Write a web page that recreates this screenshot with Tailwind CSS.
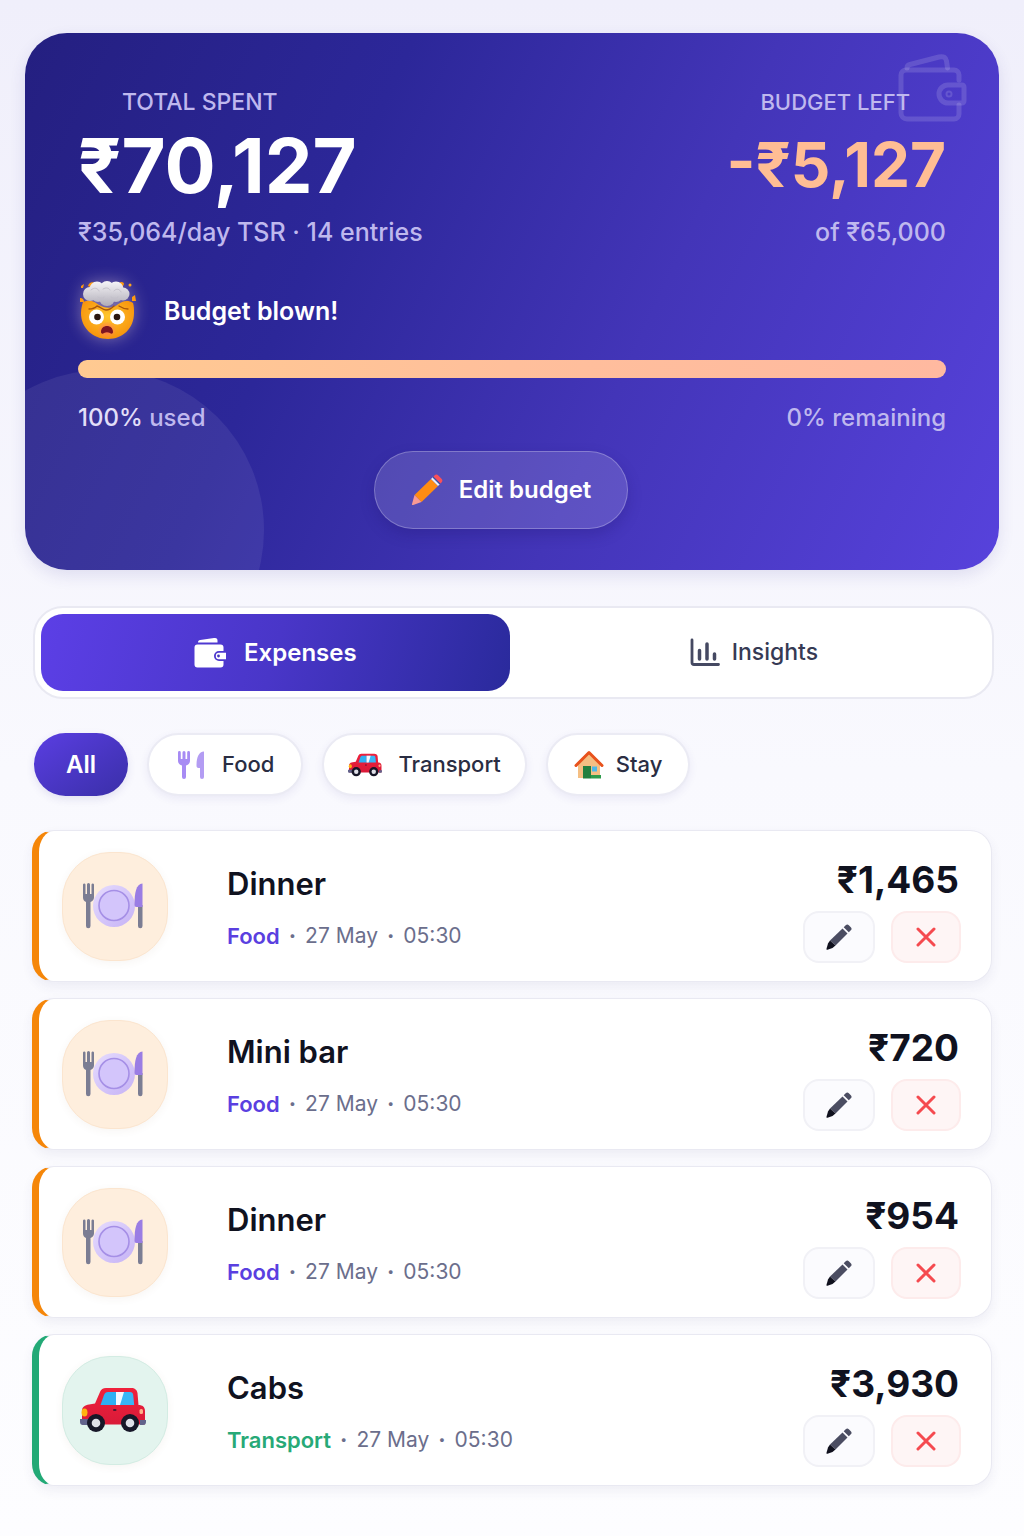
<!DOCTYPE html>
<html lang="en">
<head>
  <meta charset="UTF-8">
  <meta name="viewport" content="width=device-width, initial-scale=1.0">
  <title>Trip Expenses</title>
  <script src="https://cdn.jsdelivr.net/npm/@tailwindcss/browser@4"></script>
</head>
<body class="min-h-screen bg-linear-to-b from-[#f0effb] via-[#f9f9fe] to-[#fdfdff] font-['Inter','Liberation_Sans',sans-serif] text-[#10121f]">
  <!-- Shared icons -->
  <svg class="absolute h-0 w-0" aria-hidden="true">
    <defs>
      <linearGradient id="car-body" x1="0" y1="0" x2="0" y2="1">
        <stop offset="0" stop-color="#f0213c"/>
        <stop offset="1" stop-color="#d91a38"/>
      </linearGradient>
      <linearGradient id="plate-rim" x1="0" y1="0" x2="1" y2="1">
        <stop offset="0" stop-color="#e6dcfe"/>
        <stop offset="1" stop-color="#c5b2f5"/>
      </linearGradient>
    </defs>
    <symbol id="icon-plate" viewBox="0 0 62 46">
      <path d="M1 1.500v13a5 5 0 0 0 3 4.500V43a2 2 0 0 0 4.500 0V19a5 5 0 0 0 3.500-4.500v-13a1.300 1.300 0 0 0-2.500 0V11H8V1.500a1.500 1.500 0 0 0-3 0V11H3.500V1.500a1.300 1.300 0 0 0-2.500 0z" fill="#7b7d93"/>
      <circle cx="32" cy="23" r="21" fill="url(#plate-rim)"/>
      <circle cx="32" cy="22.500" r="15" fill="#d3c5fb" stroke="#a58fe6" stroke-width="1.600"/>
      <path d="M56 22h4.500v21a2.200 2.200 0 0 1-4.500 0z" fill="#7b7d93"/>
      <path d="M60.500.500V24h-6c-1.500 0-2-.800-2-2.500C52.500 10 54 1 60.500.500z" fill="#9a7de4"/>
    </symbol>
    <symbol id="icon-car" viewBox="0 0 66 44">
      <path d="M2 36.500V23c0-4 3-6 7-6.500l6-1L20 4c1-2.500 3-4 6-4h25c4 0 6 2 6.500 5l1 12c4 0 6.500 2 6.500 6v13.500z" fill="url(#car-body)"/>
      <path d="M20.500 17 24 7c.800-2 2-3 4-3h8v13z" fill="#2fb0f3"/>
      <path d="M36 4h14c2 0 3 1 3.200 3l1 10H36z" fill="#38b6f7"/>
      <path d="M36 4h8l-4 13h-4z" fill="#f2f8ff"/>
      <path d="M0 31h8v6H3c-2 0-3-1-3-3zM60 32h6v2c0 2-1 3-3 3h-3z" fill="#62638c"/>
      <ellipse cx="4.500" cy="24.500" rx="3" ry="4" fill="#ffb30f"/>
      <rect x="59.500" y="21" width="3.500" height="5" rx="1.500" fill="#ffb08a"/>
      <rect x="33" y="21" width="3.500" height="2" rx="1" fill="#4c1530"/>
      <circle cx="16" cy="35" r="9" fill="#171728"/>
      <circle cx="16" cy="35" r="4.300" fill="#dfe0e8"/>
      <circle cx="50" cy="35" r="9" fill="#171728"/>
      <circle cx="50" cy="35" r="4.300" fill="#dfe0e8"/>
    </symbol>
    <symbol id="icon-edit" viewBox="0 0 26 26">
      <path d="M4 16.500 16.500 4.500l5 5L9.500 21.500z" fill="#4b4d62"/>
      <path d="m4 16.500 5.500 5-3 2.500-5 1.800c-.8.200-1.200-.2-1-1L2 19.500z" fill="#10111e"/>
      <path d="m17.700 3.200 2-2c1-1 2.200-1 3.100 0l2 2c1 1 1 2.200 0 3.100l-2 2z" fill="#4b4d62"/>
    </symbol>
    <symbol id="icon-close" viewBox="0 0 20 20">
      <path d="m2 2 16 16M18 2 2 18" fill="none" stroke="#f54a4f" stroke-width="3" stroke-linecap="round"/>
    </symbol>
  </svg>

  <main class="px-[25px] pt-[33px] pb-[51px]">
    <!-- Budget summary -->
    <section class="relative overflow-hidden rounded-[42px] bg-linear-[115deg,#241f80_0%,#2c2799_32%,#4335b8_62%,#5742dc_100%] px-[53px] pt-[55px] pb-[41px] text-[#bfb8ee] shadow-[0_6px_16px_rgba(60,50,150,0.12)]">
      <div class="absolute top-[337px] -left-[81px] size-80 rounded-full bg-white/7"></div>
      <svg class="absolute top-[21px] right-[30px] h-[70px] w-[74px]" viewBox="0 0 74 70" fill="none" stroke="#fff" stroke-opacity=".14" stroke-width="5" stroke-linejoin="round" stroke-linecap="round" aria-hidden="true">
        <path d="M64 26v-5a5 5 0 0 0-5-5H11a5 5 0 0 0-5 5v38a6 6 0 0 0 6 6h47a5 5 0 0 0 5-5v-9"/>
        <path d="M12 14c0-2 1-3 3-3.500L44 3c5-1.200 7 1 7.500 4l1 7"/>
        <path d="M67 31H53a9 9 0 0 0 0 18h14a2 2 0 0 0 2-2V33a2 2 0 0 0-2-2z"/>
        <circle cx="54" cy="40" r="1"/>
      </svg>

      <div class="relative flex justify-between">
        <div>
          <p class="pl-11 text-[23px] leading-7 font-medium">TOTAL SPENT</p>
          <p class="mt-[13px] text-[76px] leading-[72px] font-bold text-white">₹70,127</p>
          <p class="mt-[15px] text-[25px] leading-8 font-medium">₹35,064/day TSR · 14 entries</p>
        </div>
        <div class="text-right">
          <p class="pr-9 text-[22px] leading-7 font-medium">BUDGET LEFT</p>
          <p class="mt-[13px] text-[62px] leading-[72px] font-bold text-[#ffbd94]">-₹5,127</p>
          <p class="mt-[15px] text-[25px] leading-8 font-medium">of ₹65,000</p>
        </div>
      </div>

      <div class="relative mt-[33px] flex items-center gap-[26px]">
        <svg class="size-[60px] drop-shadow-[0_0_8px_rgba(255,230,220,0.4)]" viewBox="0 0 60 60" aria-hidden="true">
          <defs>
            <radialGradient id="face" cx=".5" cy=".4" r=".6">
              <stop offset="0" stop-color="#ffc62b"/>
              <stop offset="1" stop-color="#f7920c"/>
            </radialGradient>
            <linearGradient id="cloud" gradientUnits="userSpaceOnUse" x1="28" y1="0" x2="28" y2="24">
              <stop offset="0" stop-color="#f6f5f8"/>
              <stop offset="1" stop-color="#b3b0bb"/>
            </linearGradient>
            <radialGradient id="blush">
              <stop offset="0" stop-color="#ff6a62"/>
              <stop offset="1" stop-color="#ff8a4a" stop-opacity=".2"/>
            </radialGradient>
          </defs>
          <path d="M5 21c7-3 12 0 16 3 5 3 13 4 18 0 4-3 10-6 16-2 1 3 1 6 1 10 0 15-11 26-26 26S3 47 3 32c0-4 1-8 2-11z" fill="url(#face)"/>
          <path d="M10 5c1-4 5-5 8-2l-4 4zM41 2c2-2 5-1 5 1l-2 4zM2 17c3 0 4 2 4 4H2zM54 16l3-2 1 6h-4zM3 5l3-2-1 4H3z" fill="#ff9a10"/>
          <circle cx="52" cy="4" r="1.500" fill="#ffa51a"/>
          <g fill="url(#cloud)">
            <circle cx="12" cy="13" r="7"/>
            <circle cx="45" cy="13" r="6.500"/>
            <circle cx="19" cy="8" r="7.500"/>
            <circle cx="38" cy="8" r="7.500"/>
            <circle cx="29" cy="7" r="7"/>
            <circle cx="20" cy="14" r="7"/>
            <circle cx="38" cy="14" r="7"/>
            <circle cx="29" cy="17" r="8"/>
          </g>
          <path d="M13 9c3-3 7-2 8 1M25 8c3-2 6-1 7 1M36 10c2-3 6-2 7 1M20 16c2 2 5 2 6 0M33 16c2 2 5 2 7 0" fill="none" stroke="#c4c1cb" stroke-linecap="round"/>
          <path d="M11 28c3 0 6-1 8-3 4 1 5 4 9 4s6-2 8-4M41 25c3 2 6 3 9 3" fill="none" stroke="#a9560c" stroke-width="1.300" stroke-linecap="round"/>
          <circle cx="18.500" cy="36" r="7.500" fill="#fff"/>
          <circle cx="39.500" cy="36" r="7.500" fill="#fff"/>
          <circle cx="19.500" cy="36" r="3.300" fill="#2b1710"/>
          <circle cx="39" cy="36" r="3.300" fill="#2b1710"/>
          <ellipse cx="29" cy="49" rx="9" ry="8" fill="url(#blush)"/>
          <path d="M23 51c0-8 12-8 12 0 0 2-2 2-3 1-2-1-4-1-6 0-1 1-3 1-3-1z" fill="#7d1522"/>
        </svg>
        <p class="text-[25px] leading-8 font-semibold text-white">Budget blown!</p>
      </div>
      <div class="relative mt-[19px] h-[18px] rounded-full bg-linear-to-r from-[#ffca91] via-[#ffbf9b] to-[#ffb9a0]"></div>
      <div class="relative mt-6 flex justify-between text-2xl leading-8 font-medium">
        <p><span class="text-[#e2dff8]">100%</span> used</p>
        <p>0% remaining</p>
      </div>
      <div class="relative mt-[17px] flex justify-center pr-[22px]">
        <button type="button" class="flex h-[78px] items-center gap-4 rounded-full border border-white/25 bg-white/14 px-9 text-2xl font-semibold text-white shadow-[0_6px_14px_rgba(30,20,110,0.25)]">
          <svg class="size-8" viewBox="0 0 32 32" aria-hidden="true">
            <path d="M3.500 21 20 5l7 7-16.500 16z" fill="#ff8c12"/>
            <path d="m3.500 21 7 7-8.300 3C1.200 31.300.700 30.800 1 30z" fill="#f99a94"/>
            <path d="m20 5 2-2 7 7-2 2z" fill="#e8eefb"/>
            <path d="m21.500 3.500.8-.8 7 7-.8.8z" fill="#2b4a9c"/>
            <path d="m22.500 2.500 1-1c1.200-1.200 2.600-1.200 3.800 0l3.200 3.200c1.200 1.200 1.200 2.600 0 3.800l-1 1z" fill="#fa5058"/>
          </svg>
          Edit budget
        </button>
      </div>
    </section>

    <!-- Tabs -->
    <nav class="mt-9 mr-[5px] ml-2 flex rounded-[30px] border-2 border-[#e9e9f2] bg-white p-1.5">
      <button type="button" class="flex h-[77px] w-[49.6%] items-center justify-center gap-[18px] rounded-[22px] bg-linear-[105deg,#5c3fe6_0%,#4936c8_50%,#2a2a9c_100%] text-2xl font-semibold text-white">
        <svg class="size-8" viewBox="0 0 32 32" aria-hidden="true">
          <path d="M4 5.500c0-1.500.800-2.200 2.200-2.400L20 1c2.500-.400 3.500.500 3.500 2.500v2z" fill="#fff"/>
          <path d="M3.500 7.500h23a3 3 0 0 1 3 3V14H25a5 5 0 0 0 0 10h4.500v3.500a3 3 0 0 1-3 3h-23a3 3 0 0 1-3-3v-17a3 3 0 0 1 3-3z" fill="#fff"/>
          <path d="M25 15.800h7v6.400h-7a3.200 3.200 0 0 1 0-6.400z" fill="#fff"/>
          <circle cx="24.500" cy="19" r="1.400" fill="#4434bd"/>
        </svg>
        Expenses
      </button>
      <button type="button" class="flex flex-1 items-center justify-center gap-3 pl-3 text-[23px] font-medium text-[#363a54]">
        <svg class="size-[30px]" viewBox="0 0 30 30" fill="none" stroke="#454962" stroke-linecap="round" stroke-linejoin="round" aria-hidden="true">
          <path d="M2 2v22.500a2 2 0 0 0 2 2h24.500" stroke-width="2.800"/>
          <path d="M9.500 12.500V21M17 6v15M24.500 16v5" stroke-width="3.500"/>
        </svg>
        Insights
      </button>
    </nav>

    <!-- Category filters -->
    <div class="mt-[34px] ml-[9px] flex gap-[19px] text-[22px] font-medium text-[#2a2d42]">
      <button type="button" class="h-[63px] rounded-full bg-linear-to-br from-[#5a3ee2] to-[#3a2fa8] px-8 text-2xl font-semibold text-white shadow-[0_3px_8px_rgba(60,50,150,0.12)]">All</button>
      <button type="button" class="flex h-[63px] items-center gap-4 rounded-full border-2 border-[#ebebf4] bg-white px-[27px] shadow-[0_3px_8px_rgba(60,50,150,0.08)]">
        <svg class="h-7 w-[30px]" viewBox="0 0 30 28" aria-hidden="true">
          <path d="M2 1.500v8c0 2.500 1.500 4.500 4 5V26a2 2 0 0 0 4 0V14.500c2.500-.500 4-2.500 4-5v-8a1.400 1.400 0 0 0-2.800 0V8H9.500V1.500a1.500 1.500 0 0 0-3 0V8H4.800V1.500a1.400 1.400 0 0 0-2.800 0z" fill="#a78bf4"/>
          <path d="M28 .500V26a2 2 0 0 1-4 0v-9h-1.500c-1.500 0-2-1-2-2.500C20.500 7 22.500.500 28 .500z" fill="#b39cf3"/>
        </svg>
        Food
      </button>
      <button type="button" class="flex h-[63px] items-center gap-4 rounded-full border-2 border-[#ebebf4] bg-white px-6 shadow-[0_3px_8px_rgba(60,50,150,0.08)]">
        <svg class="h-6 w-[34px]" aria-hidden="true"><use href="#icon-car"/></svg>
        Transport
      </button>
      <button type="button" class="flex h-[63px] items-center gap-3 rounded-full border-2 border-[#ebebf4] bg-white px-[26px] shadow-[0_3px_8px_rgba(60,50,150,0.08)]">
        <svg class="size-[30px]" viewBox="0 0 30 30" aria-hidden="true">
          <path d="M4 13 15 3l11 10v15H4z" fill="#f5bf83"/>
          <path d="m2 15.500 13-13 13 13" fill="none" stroke="#e8521c" stroke-width="3" stroke-linecap="round" stroke-linejoin="round"/>
          <path d="M9 16h8v12.500H9z" fill="#23803f"/>
          <path d="M18 16.500h5v5h-5z" fill="#4cb9e8"/>
          <path d="M17 25h10v3.500H17z" fill="#2e9b4c"/>
        </svg>
        Stay
      </button>
    </div>

    <!-- Expense cards are rendered here -->
    <ul id="expense-list" class="mt-[34px] mr-[7px] ml-[7px] flex flex-col gap-4"></ul>
  </main>

  <script>
    const categories = {
      food: { label: 'Food', icon: 'icon-plate', size: 'h-[46px] w-[62px]', border: 'border-l-[#f58609]', tile: 'bg-[#feeedd] border-[#fbe5cf]', text: 'text-[#5a3fe0]' },
      transport: { label: 'Transport', icon: 'icon-car', size: 'h-[44px] w-[66px]', border: 'border-l-[#22a976]', tile: 'bg-[#e3f4ee] border-[#d3ece3]', text: 'text-[#27a977]' }
    };

    const expenses = [
      { title: 'Dinner', category: 'food', date: '27 May', time: '05:30', amount: 1465 },
      { title: 'Mini bar', category: 'food', date: '27 May', time: '05:30', amount: 720 },
      { title: 'Dinner', category: 'food', date: '27 May', time: '05:30', amount: 954 },
      { title: 'Cabs', category: 'transport', date: '27 May', time: '05:30', amount: 3930 }
    ];

    // Function to render the expense cards
    function renderExpenses() {
      const list = document.getElementById('expense-list');
      list.innerHTML = '';

      expenses.forEach((expense) => {
        const category = categories[expense.category];
        const item = document.createElement('li');
        item.className = `flex h-[152px] items-center rounded-[22px] border border-l-[7px] border-[#e9e9f2] bg-white pr-[30px] pl-[23px] shadow-[0_5px_12px_rgba(60,60,120,0.07)] ${category.border}`;
        item.innerHTML = `
          <div class="flex h-[109px] w-[106px] shrink-0 items-center justify-center rounded-[48px] border pr-1 shadow-[0_2px_8px_rgba(120,90,50,0.06)] ${category.tile}">
            <svg class="${category.size}" aria-hidden="true"><use href="#${category.icon}"/></svg>
          </div>
          <div class="ml-[59px] flex-1 pt-1">
            <h3 class="text-[31px] leading-10 font-semibold">${expense.title}</h3>
            <p class="mt-4 flex gap-[9px] text-[22px] leading-8 text-[#6b6e8c]">
              <span class="font-semibold ${category.text}">${category.label}</span>
              <span class="font-bold">·</span>
              <span class="text-[21px]">${expense.date}</span>
              <span class="font-bold">·</span>
              <span class="text-[21px]">${expense.time}</span>
            </p>
          </div>
          <div class="flex flex-col items-end pt-2.5">
            <p class="pr-0.5 text-[37px] leading-10 font-bold">₹${expense.amount.toLocaleString('en-IN')}</p>
            <div class="mt-[11px] flex gap-4">
              <button type="button" aria-label="Edit" class="flex h-[52px] w-[72px] items-center justify-center rounded-2xl border-2 border-[#f1f1f6] bg-[#fbfbfe]">
                <svg class="size-[26px]" aria-hidden="true"><use href="#icon-edit"/></svg>
              </button>
              <button type="button" aria-label="Delete" class="flex h-[52px] w-[70px] items-center justify-center rounded-2xl border-2 border-[#fdebeb] bg-[#fef5f5]">
                <svg class="size-5" aria-hidden="true"><use href="#icon-close"/></svg>
              </button>
            </div>
          </div>
        `;
        list.appendChild(item);
      });
    }

    // Initialize the list on page load
    renderExpenses();
  </script>
</body>
</html>
